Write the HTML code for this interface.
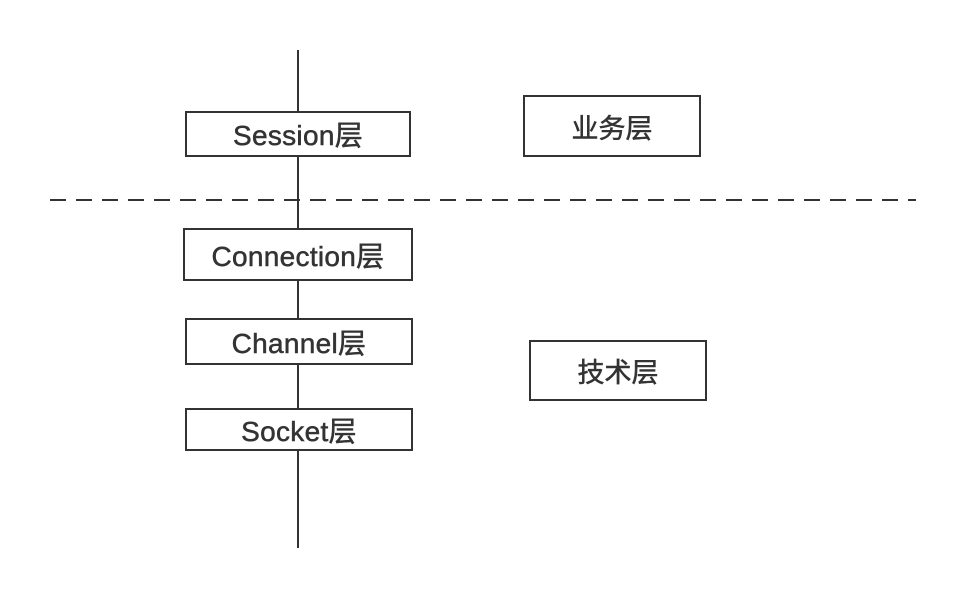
<!DOCTYPE html>
<html><head><meta charset="utf-8"><style>
body{margin:0;width:964px;height:597px;background:#fff;position:relative;overflow:hidden;font-family:"Liberation Sans","Noto Sans CJK SC",sans-serif;}
.b{position:absolute;box-sizing:border-box;border:2px solid #333;background:#fff;display:flex;align-items:center;justify-content:center;font-size:28px;letter-spacing:0.3px;color:#333;-webkit-text-stroke:0.5px #333;}
.c{font-size:27px;letter-spacing:0;}
.v{position:absolute;left:297px;width:2px;top:50px;height:498px;background:#333;}
.d{position:absolute;left:50px;top:199px;width:866px;height:2px;background:repeating-linear-gradient(to right,#333 0 16px,transparent 16px 26px);}
</style></head><body>
<div class="v"></div>
<div class="d"></div>
<div class="b" style="left:185px;top:111px;width:226px;height:46px">Session层</div>
<div class="b c" style="left:523px;top:95px;width:178px;height:62px">业务层</div>
<div class="b" style="left:183px;top:228px;width:230px;height:53px">Connection层</div>
<div class="b" style="left:185px;top:318px;width:228px;height:47px">Channel层</div>
<div class="b" style="left:185px;top:408px;width:228px;height:43px">Socket层</div>
<div class="b c" style="left:529px;top:340px;width:178px;height:61px">技术层</div>
</body></html>
